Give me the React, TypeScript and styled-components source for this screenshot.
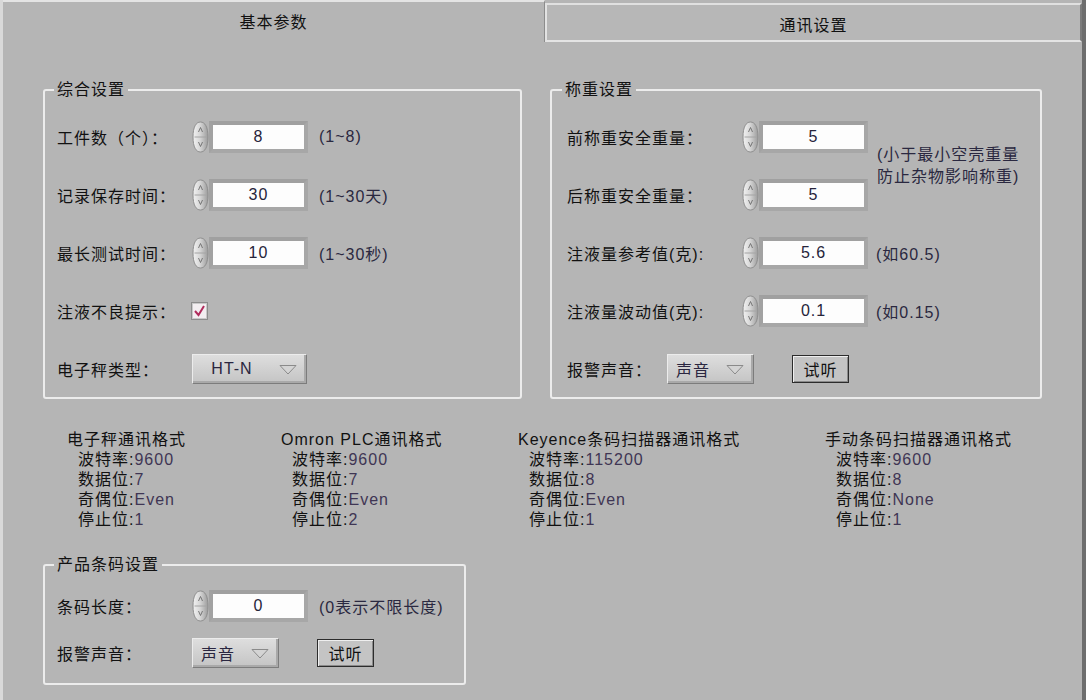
import React from 'react';
import styled, { createGlobalStyle } from 'styled-components';

const GlobalStyle = createGlobalStyle`
  html, body {
    margin: 0;
    padding: 0;
    background: #b5b5b5;
  }
  body {
    font-family: 'Liberation Sans', 'Noto Sans CJK SC', sans-serif;
    font-size: 16px;
    color: #111;
    letter-spacing: 1px;
  }
`;

const Screen = styled.div`
  width: 1086px;
  height: 700px;
  box-sizing: border-box;
  overflow: hidden;
  background: #b5b5b5;
  border-left: 3px solid #d9d9d9;
  border-right: 4px solid #6e6e6e;
  display: flex;
  flex-direction: column;
`;

const TabBar = styled.div`
  display: flex;
  height: 42px;
  flex-shrink: 0;
`;

const Tab = styled.div<{ $active?: boolean }>`
  box-sizing: border-box;
  display: flex;
  align-items: center;
  justify-content: center;
  ${(p) =>
    p.$active
      ? `
    width: 542px;
    height: 42px;
    border-top: 2px solid #e4e4e4;
    border-right: 1px solid #8c8c8c;
    padding-bottom: 3px;
  `
      : `
    flex: 1;
    margin-top: 3px;
    height: 39px;
    background: #b7b7b7;
    border-top: 2px solid #e0e0e0;
    border-left: 2px solid #e2e2e2;
    border-right: 2px solid #7c7c7c;
    border-bottom: 2px solid #e4e4e4;
    padding-top: 3px;
  `}
`;

const Panel = styled.div`
  flex: 1;
  padding-left: 40px;
`;

const GroupsRow = styled.div`
  display: flex;
  gap: 28px;
  margin-top: 39px;
`;

const Group = styled.fieldset<{ $w: number; $pt: number; $pb: number; $pl: number }>`
  width: ${(p) => p.$w}px;
  box-sizing: border-box;
  margin: 0;
  padding: ${(p) => p.$pt}px 0 ${(p) => p.$pb}px ${(p) => p.$pl}px;
  border: 2px solid #ececec;
  border-radius: 3px;
  min-width: 0;
`;

const Legend = styled.legend<{ $ml: number }>`
  margin-left: ${(p) => p.$ml}px;
  padding: 0 3px;
  line-height: 18px;
  height: 18px;
`;

const Rows = styled.div<{ $gap: number }>`
  display: flex;
  flex-direction: column;
  gap: ${(p) => p.$gap}px;
`;

const Row = styled.div`
  display: flex;
  align-items: center;
  height: 32px;
`;

const Label = styled.span<{ $w: number }>`
  width: ${(p) => p.$w}px;
  flex-shrink: 0;
  white-space: nowrap;
`;

const NumBox = styled.div<{ $w: number }>`
  width: ${(p) => p.$w}px;
  flex-shrink: 0;
  height: 32px;
  box-sizing: border-box;
  border: 4px solid #a7a7a7;
  border-top-color: #a0a0a0;
  border-left-color: #a2a2a2;
  background: #fdfdfd;
  display: flex;
  align-items: center;
  justify-content: center;
  color: #26243a;
`;

const Hint = styled.span<{ $ml: number }>`
  margin-left: ${(p) => p.$ml}px;
  color: #2a2840;
  white-space: nowrap;
`;

const Dropdown = styled.div<{ $w: number }>`
  width: ${(p) => p.$w}px;
  flex-shrink: 0;
  height: 30px;
  box-sizing: border-box;
  display: flex;
  align-items: center;
  padding-right: 9px;
  background: linear-gradient(#dedede, #c4c4c4);
  border: 1px solid;
  border-color: #ececec #7c7c7c #7c7c7c #ececec;
  box-shadow: inset -2px -2px 0 #a9a9a9;
  color: #2a2640;
`;

const DropText = styled.span`
  flex: 1;
  text-align: center;
`;

const Button = styled.div<{ $ml: number }>`
  margin-left: ${(p) => p.$ml}px;
  width: 57px;
  height: 28px;
  flex-shrink: 0;
  box-sizing: border-box;
  display: flex;
  align-items: center;
  justify-content: center;
  border: 1px solid #2c2c2c;
  background: #c4c4c4;
  box-shadow: inset 1px 1px 0 #efefef, inset -1px -1px 0 #8a8a8a;
`;

const PairWrap = styled.div`
  display: flex;
  align-items: center;
`;

const Note = styled.div`
  margin-left: 9px;
  line-height: 22px;
  color: #2a2840;
  white-space: nowrap;
`;

const CommRow = styled.div`
  display: grid;
  grid-template-columns: 214px 237px 307px auto;
  margin-top: 31px;
  padding-left: 24px;
`;

const CommBlock = styled.div`
  line-height: 20px;
`;

const CommTitle = styled.div`
  white-space: nowrap;
`;

const CommLine = styled.div`
  padding-left: 11px;
  white-space: nowrap;
`;

const Value = styled.span`
  color: #3f3654;
`;

const BottomGroupWrap = styled.div`
  margin-top: 26px;
`;

const Spinner = () => (
  <svg width="17" height="32" viewBox="0 0 17 32" style={{ flexShrink: 0 }}>
    <defs>
      <linearGradient id="spg" x1="0" x2="1" y1="0" y2="0">
        <stop offset="0" stopColor="#f2f2f2" />
        <stop offset="0.45" stopColor="#d8d8d8" />
        <stop offset="1" stopColor="#9c9c9c" />
      </linearGradient>
    </defs>
    <path
      d="M8.5 1 C13 1 16 6 16 16 C16 26 13 31 8.5 31 C4 31 1 26 1 16 C1 6 4 1 8.5 1 Z"
      fill="url(#spg)"
      stroke="#8e8e8e"
    />
    <line x1="2.5" y1="16" x2="14.5" y2="16" stroke="#a4a4a4" />
    <path d="M6.5 11 L8.5 6.5 L10.5 11" fill="none" stroke="#6c6c6c" strokeWidth="0.9" />
    <path d="M6.5 21 L8.5 25.5 L10.5 21" fill="none" stroke="#6c6c6c" strokeWidth="0.9" />
  </svg>
);

const Arrow = () => (
  <svg width="18" height="11" viewBox="0 0 18 11" style={{ marginLeft: 8, flexShrink: 0 }}>
    <path d="M1 1.5 L17 1.5 L9 10 Z" fill="#d4d4d4" stroke="#8a8a8a" strokeWidth="1" />
  </svg>
);

const Check = () => (
  <svg width="17" height="18" viewBox="0 0 17 18">
    <rect x="0.5" y="0.5" width="16" height="17" fill="#f3eef1" stroke="#8c8c8c" />
    <rect x="1.5" y="1.5" width="14" height="15" fill="none" stroke="#c9c9c9" />
    <path d="M4 9 L7.5 13 L13 4" fill="none" stroke="#b02c5c" strokeWidth="2" />
  </svg>
);

interface INumRow {
  label: string;
  labelW: number;
  value: string;
  boxW: number;
  hint?: string;
  hintMl?: number;
}

const NumRow = ({ label, labelW, value, boxW, hint, hintMl = 11 }: INumRow) => (
  <Row>
    <Label $w={labelW}>{label}</Label>
    <Spinner />
    <NumBox $w={boxW}>{value}</NumBox>
    {hint && <Hint $ml={hintMl}>{hint}</Hint>}
  </Row>
);

const comms = [
  {
    title: '电子秤通讯格式',
    lines: [
      ['波特率', '9600'],
      ['数据位', '7'],
      ['奇偶位', 'Even'],
      ['停止位', '1'],
    ],
  },
  {
    title: 'Omron PLC通讯格式',
    lines: [
      ['波特率', '9600'],
      ['数据位', '7'],
      ['奇偶位', 'Even'],
      ['停止位', '2'],
    ],
  },
  {
    title: 'Keyence条码扫描器通讯格式',
    lines: [
      ['波特率', '115200'],
      ['数据位', '8'],
      ['奇偶位', 'Even'],
      ['停止位', '1'],
    ],
  },
  {
    title: '手动条码扫描器通讯格式',
    lines: [
      ['波特率', '9600'],
      ['数据位', '8'],
      ['奇偶位', 'None'],
      ['停止位', '1'],
    ],
  },
];

const App = () => {
  return (
    <>
      <GlobalStyle />
      <Screen>
        <TabBar>
          <Tab $active>基本参数</Tab>
          <Tab>通讯设置</Tab>
        </TabBar>
        <Panel>
          <GroupsRow>
            <Group $w={479} $pt={22} $pb={12} $pl={12}>
              <Legend $ml={-3}>综合设置</Legend>
              <Rows $gap={26}>
                <NumRow label="工件数（个）：" labelW={135} value="8" boxW={99} hint="(1~8)" />
                <NumRow label="记录保存时间：" labelW={135} value="30" boxW={99} hint="(1~30天)" />
                <NumRow label="最长测试时间：" labelW={135} value="10" boxW={99} hint="(1~30秒)" />
                <Row>
                  <Label $w={134}>注液不良提示：</Label>
                  <Check />
                </Row>
                <Row>
                  <Label $w={135}>电子秤类型：</Label>
                  <Dropdown $w={115}>
                    <DropText>HT-N</DropText>
                    <Arrow />
                  </Dropdown>
                </Row>
              </Rows>
            </Group>

            <Group $w={492} $pt={22} $pb={12} $pl={15}>
              <Legend $ml={-5}>称重设置</Legend>
              <Rows $gap={26}>
                <PairWrap>
                  <Rows $gap={26}>
                    <NumRow label="前称重安全重量：" labelW={175} value="5" boxW={109} />
                    <NumRow label="后称重安全重量：" labelW={175} value="5" boxW={109} />
                  </Rows>
                  <Note>
                    (小于最小空壳重量
                    <br />
                    防止杂物影响称重)
                  </Note>
                </PairWrap>
                <NumRow label="注液量参考值(克):" labelW={175} value="5.6" boxW={109} hint="(如60.5)" hintMl={8} />
                <NumRow label="注液量波动值(克):" labelW={175} value="0.1" boxW={109} hint="(如0.15)" hintMl={8} />
                <Row>
                  <Label $w={100}>报警声音：</Label>
                  <Dropdown $w={87}>
                    <DropText>声音</DropText>
                    <Arrow />
                  </Dropdown>
                  <Button $ml={38}>试听</Button>
                </Row>
              </Rows>
            </Group>
          </GroupsRow>

          <CommRow>
            {comms.map((c, index) => (
              <CommBlock key={index}>
                <CommTitle>{c.title}</CommTitle>
                {c.lines.map(([k, v]) => (
                  <CommLine key={k}>
                    {k}:<Value>{v}</Value>
                  </CommLine>
                ))}
              </CommBlock>
            ))}
          </CommRow>

          <BottomGroupWrap>
            <Group $w={423} $pt={16} $pb={14} $pl={12}>
              <Legend $ml={-3}>产品条码设置</Legend>
              <Rows $gap={15}>
                <NumRow label="条码长度：" labelW={135} value="0" boxW={99} hint="(0表示不限长度)" />
                <Row>
                  <Label $w={135}>报警声音：</Label>
                  <Dropdown $w={87}>
                    <DropText>声音</DropText>
                    <Arrow />
                  </Dropdown>
                  <Button $ml={38}>试听</Button>
                </Row>
              </Rows>
            </Group>
          </BottomGroupWrap>
        </Panel>
      </Screen>
    </>
  );
};

export default App;
